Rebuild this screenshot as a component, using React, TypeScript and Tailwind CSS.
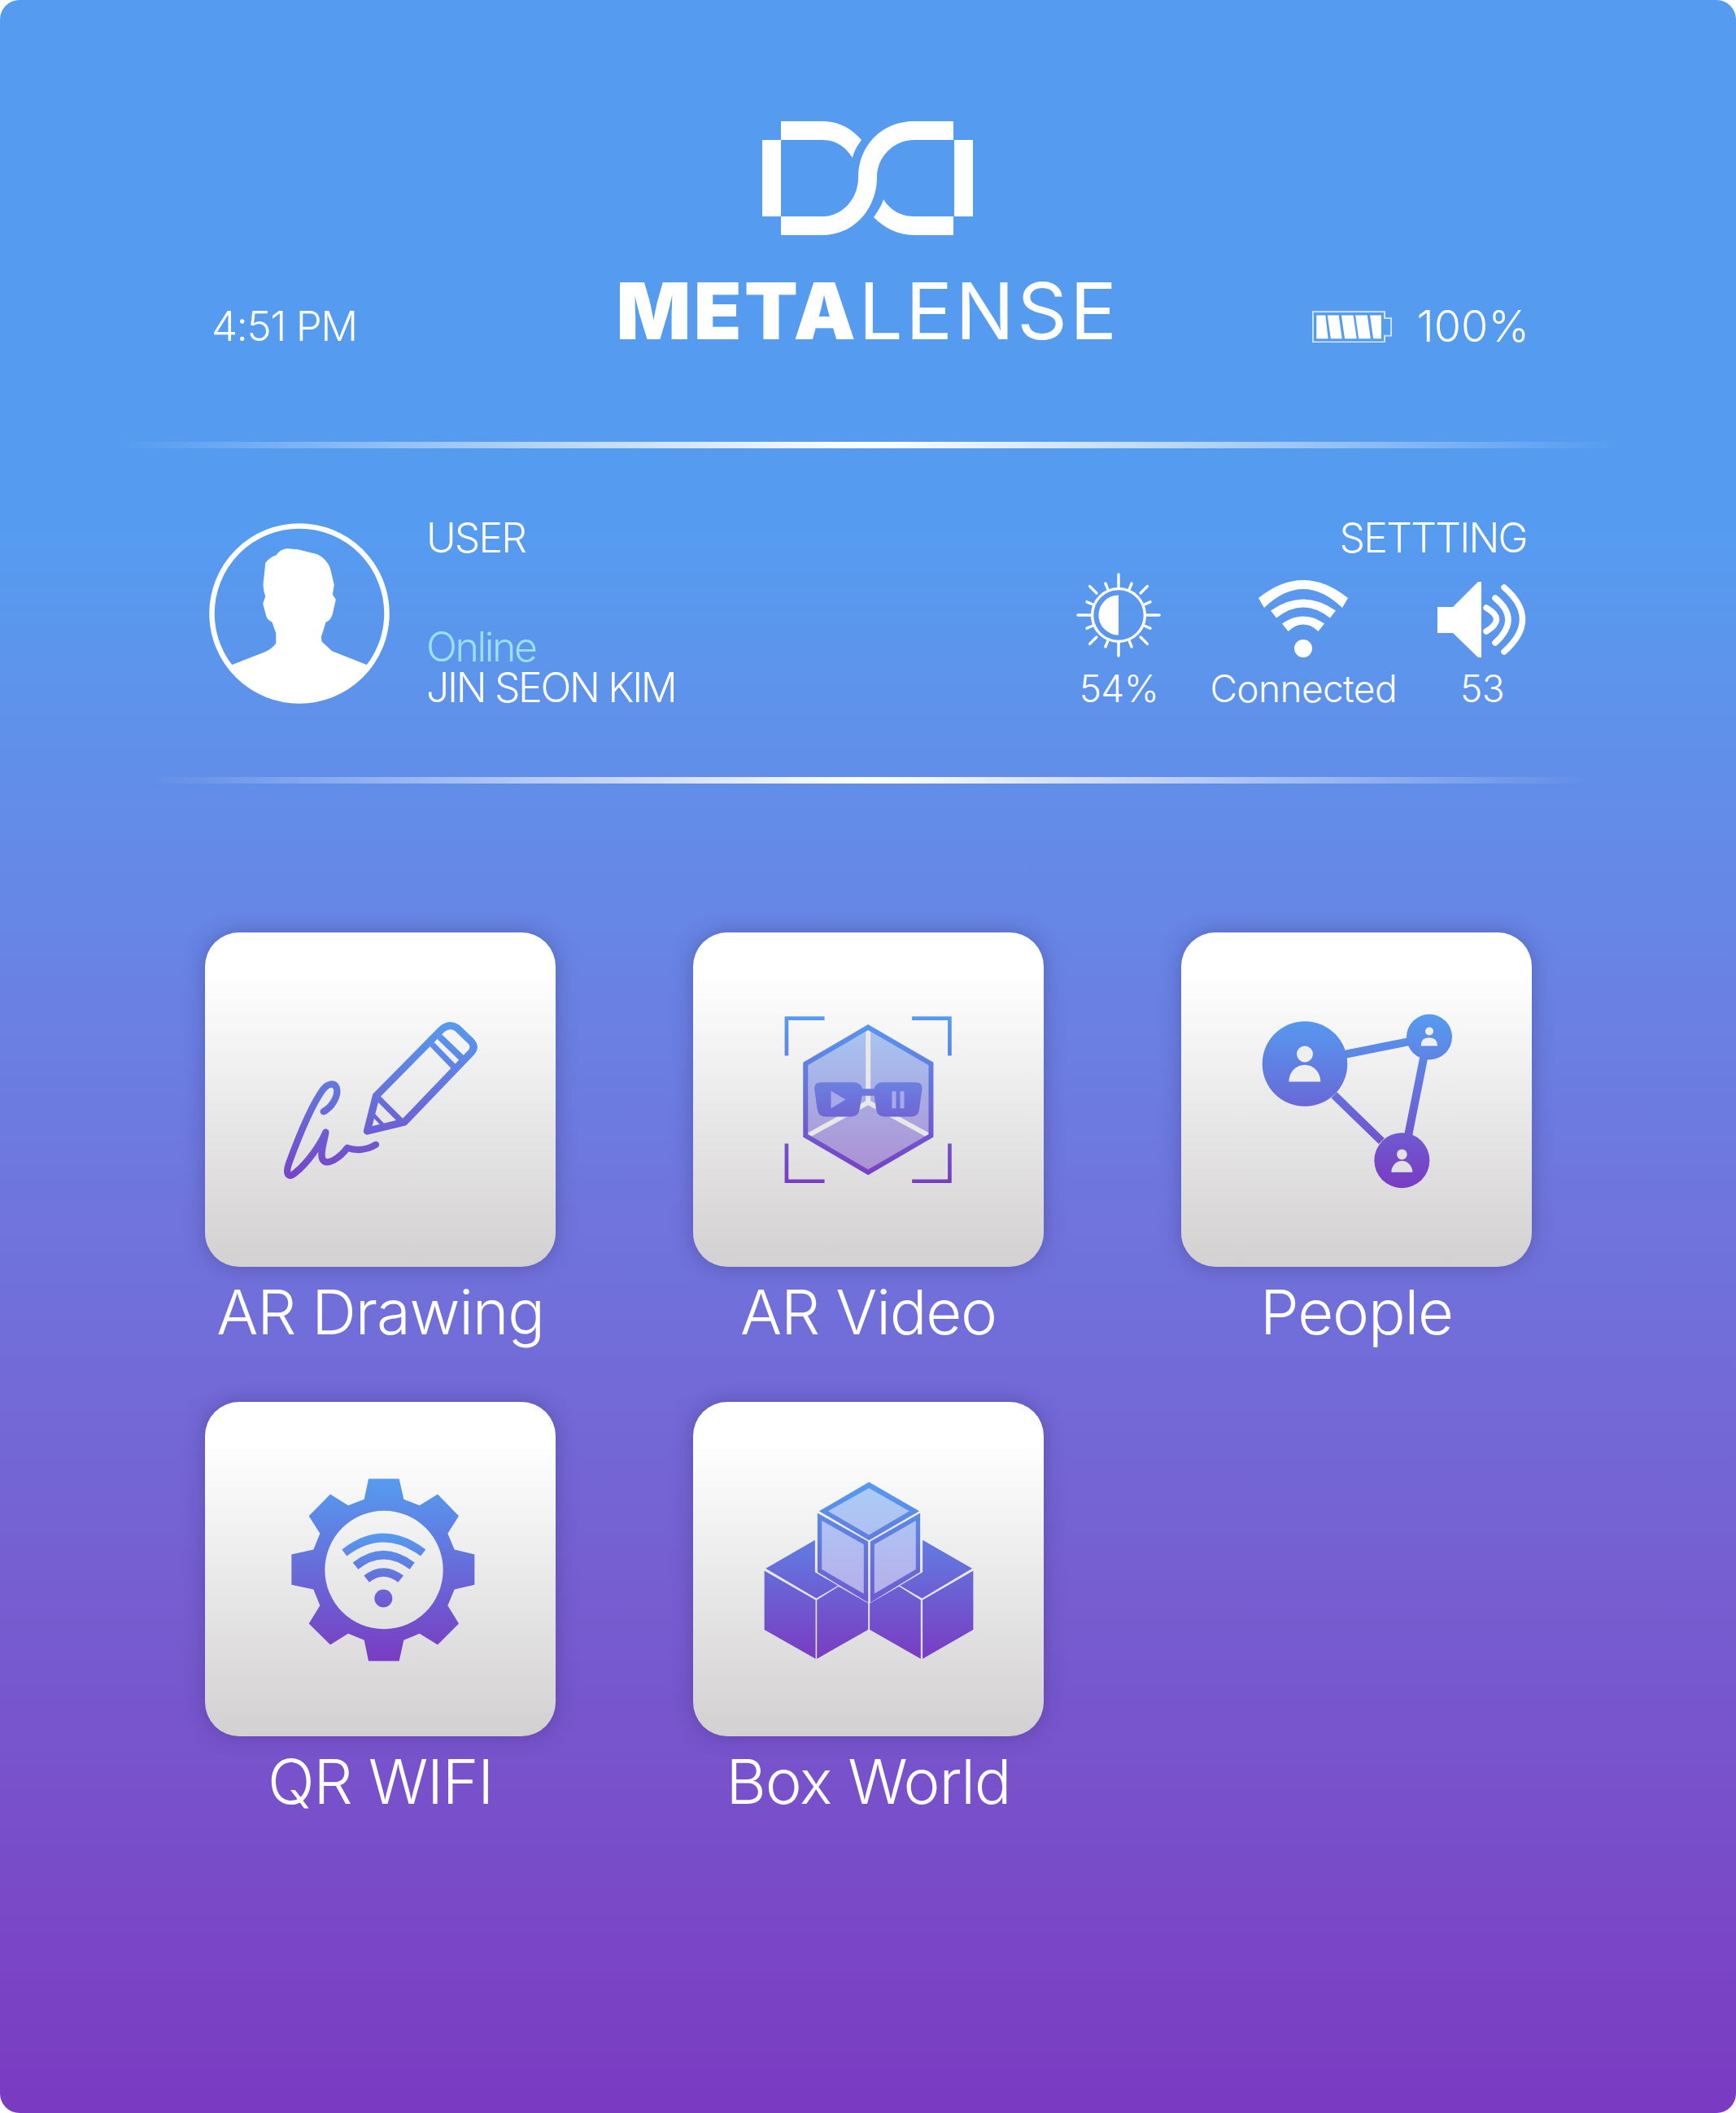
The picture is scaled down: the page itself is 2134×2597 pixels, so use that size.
const font = "[font-family:Inter,'Noto_Sans',sans-serif]";

function Logo() {
  return (
    <svg viewBox="938 149 260 141" className="w-[260px] h-[141px]" fill="#fff">
      <rect x="938" y="172" width="23" height="94" />
      <rect x="1174" y="172" width="23" height="94" />
      <path d="M961,149 H1012 C1032,149 1048,158 1060,172 C1054,180 1051,186 1049,194 C1040,180 1028,172 1012,172 H961 Z" />
      <path d="M961,266 H1012 C1036,266 1056,245 1056,218 C1056,180 1084,149 1125,149 H1173 V172 H1125 C1099,172 1079,193 1079,218 C1079,256 1051,289 1012,289 H961 Z" />
      <path d="M1173,289 H1125 C1105,289 1088,280 1075,267 C1081,258 1085,252 1087,245 C1095,258 1108,266 1125,266 H1173 Z" />
    </svg>
  );
}

function Battery() {
  return (
    <svg viewBox="820 110 240 108" preserveAspectRatio="none" className="w-[98px] h-[39px]">
      <path d="M822,113 H1038 V135 H1058 V195 H1038 V216 H822 Z" fill="none" stroke="#d5e6fb" strokeWidth="5" />
      <path d="M833,125 H860 L868,205 H833 Z M866,125 H900 L910,205 H876 Z M908,125 H944 L954,205 H918 Z M950,125 H986 L996,205 H960 Z M994,125 H1028 V205 H1004 Z" fill="#fff" />
    </svg>
  );
}

function Avatar() {
  return (
    <svg viewBox="0 0 222 222" className="w-[222px] h-[222px] shrink-0">
      <circle cx="111" cy="111" r="107.5" fill="none" stroke="#fff" strokeWidth="6.5" />
      <path
        d="M25.4,176 L69,159 Q78,155 83,148 L83,135 L78,121 Q72,118 71,114 L67,99 L70,90 Q66,80 68,69 L70,49 Q76,42 83,40 Q88,32 97,32 L109,33 L133,39 Q144,45 148,55 L153,76 L151,88 L155,94 L151,112 Q148,120 143,121 L137,140 L138,146 L151,158 L196.6,176 A107.5,107.5 0 0 1 25.4,176 Z"
        fill="#fff"
        stroke="#fff"
        strokeWidth="1.5"
        strokeLinejoin="round"
      />
    </svg>
  );
}

function Sun() {
  const angles = [0, 45, 90, 135, 180, 225, 270, 315];
  return (
    <svg viewBox="-53 -53 106 106" className="w-[104px] h-[104px]">
      <circle r="33" fill="none" stroke="#fff" strokeWidth="3.5" />
      <path d="M0,-25 A25,25 0 0 0 0,25 Z" fill="#fff" />
      <g stroke="#fff" strokeWidth="3.5" strokeLinecap="round">
        {angles.map((a) => (
          <line key={a} x1="0" y1={a % 90 === 0 ? -35 : -39} x2="0" y2="-51" transform={`rotate(${a})`} />
        ))}
        {angles.map((a) => (
          <line key={a} x1="0" y1="-36" x2="0" y2="-43" transform={`rotate(${a + 22.5})`} />
        ))}
      </g>
    </svg>
  );
}

function WifiBig() {
  return (
    <svg viewBox="0 0 110 95" className="w-[110px] h-[95px]" fill="#fff">
      <path d="M0,22 Q55,-22 110,22 L103,34 Q55,-12 7,34 Z" />
      <path d="M15,37.5 Q55,9.5 95,37.5 L88,46.5 Q55,20.5 22,46.5 Z" />
      <path d="M29,53.5 Q55,35.7 81,53.5 L73.5,63 Q55,46.2 36.5,63 Z" />
      <circle cx="55" cy="84" r="11" />
    </svg>
  );
}

function Speaker() {
  return (
    <svg viewBox="0 0 110 93" className="w-[110px] h-[93px]">
      <path d="M0,31 H19 L50,0 H54 V93 H50 L19,63 H0 Z" fill="#fff" />
      <g fill="none" stroke="#fff" strokeWidth="7.5" strokeLinecap="round">
        <path d="M60,32 Q85,46 60,61" />
        <path d="M71,20 Q103,46 71,75" />
        <path d="M82,7 Q127,46 82,86" />
      </g>
    </svg>
  );
}

function Divider() {
  return <div className="h-[8px] w-full bg-linear-to-r from-transparent via-white to-transparent" />;
}

function Grad({ id, y1, y2 }: { id: string; y1: number; y2: number }) {
  return (
    <linearGradient id={id} gradientUnits="userSpaceOnUse" x1="0" x2="0" y1={y1} y2={y2}>
      <stop offset="0" stopColor="#559cf0" />
      <stop offset="1" stopColor="#7a3bc2" />
    </linearGradient>
  );
}

function PencilIcon() {
  return (
    <svg viewBox="35 46 1293 1232" className="w-full h-full">
      <defs>
        <Grad id="pen" y1={372} y2={1010} />
      </defs>
      <g fill="none" stroke="url(#pen)" strokeLinejoin="round">
        <path strokeWidth="27" d="M633,778 L666,648 L905,406 Q935,378 965,398 L1015,446 Q1036,468 1015,490 L770,745 Z" />
        <path strokeWidth="22" d="M872,458 L952,540" />
        <path strokeWidth="24" d="M900,430 L985,512" />
        <path strokeWidth="22" d="M672,655 L765,748" />
        <path strokeWidth="14" d="M650,712 L695,760" />
        <path
          strokeWidth="25"
          strokeLinecap="round"
          d="M472,706 C500,692 530,650 520,618 C512,598 488,602 470,625 C430,680 380,800 345,895 C328,942 345,952 370,930 C410,898 460,830 480,782 C475,820 456,862 470,885 C485,905 530,880 560,840 C590,850 630,850 665,828"
        />
      </g>
    </svg>
  );
}

function VideoIcon() {
  return (
    <svg viewBox="37 46 1294 1232" className="w-full h-full">
      <defs>
        <Grad id="hex" y1={354} y2={970} />
        <linearGradient id="lens" gradientUnits="userSpaceOnUse" x1="0" x2="0" y1="598" y2="725">
          <stop offset="0" stopColor="#6b80e0" />
          <stop offset="1" stopColor="#7065d5" />
        </linearGradient>
      </defs>
      <path d="M683,395 L915,530 V795 L683,930 L452,795 V530 Z" fill="url(#hex)" fillOpacity="0.5" />
      <path d="M683,405 V672 M460,795 L683,672 L908,795" fill="none" stroke="#e8e8e8" strokeWidth="18" />
      <path d="M683,395 L915,530 V795 L683,930 L452,795 V530 Z" fill="none" stroke="url(#hex)" strokeWidth="18" />
      <path d="M382,500 V362 H522 M845,362 H984 V500 M382,824 V963 H522 M845,963 H984 V824" fill="none" stroke="url(#hex)" strokeWidth="14" />
      <path
        fill="url(#lens)"
        d="M510,598 H630 Q655,598 662,622 H705 Q712,598 735,598 H858 Q885,598 882,625 L872,695 Q870,725 842,725 H745 Q715,725 712,695 L706,648 H660 L652,695 Q648,725 620,725 H525 Q498,725 495,695 L485,625 Q482,598 510,598 Z"
      />
      <path d="M546,630 L600,662 L546,694 Z M771,631 H786 V694 H771 Z M801,631 H816 V694 H801 Z" fill="#a9a9ea" />
    </svg>
  );
}

function PeopleIcon() {
  return (
    <svg viewBox="36 46 1293 1232" className="w-full h-full">
      <defs>
        <Grad id="ppl" y1={348} y2={987} />
      </defs>
      <path d="M640,495 L880,447 M932,500 L872,800 M600,645 L775,815" stroke="url(#ppl)" strokeWidth="30" fill="none" />
      <circle cx="492" cy="530" r="157" fill="url(#ppl)" />
      <circle cx="951" cy="431" r="84" fill="url(#ppl)" />
      <circle cx="850" cy="886" r="102" fill="url(#ppl)" />
      <g fill="#efefef">
        <circle cx="492" cy="494" r="30" />
        <path d="M433,596 A58,62 0 0 1 550,596 Z" />
        <circle cx="951" cy="410" r="15" />
        <path d="M920,464 Q920,433 950,433 Q981,433 981,464 Z" />
      </g>
      <g fill="#e3e2e2">
        <circle cx="850" cy="864" r="19" />
        <path d="M811,930 A39,42 0 0 1 889,930 Z" />
      </g>
    </svg>
  );
}

function GearIcon() {
  return (
    <svg viewBox="35 38 1293 1232" className="w-full h-full">
      <defs>
        <Grad id="gear" y1={321} y2={993} />
        <Grad id="gearwifi" y1={522} y2={900} />
      </defs>
      <path
        fill="url(#gear)"
        fillRule="evenodd"
        d="M638,321 H751 L768,397 L826,419 L893,378 L971,458 L930,523 L955,582 L1029,600 V712 L955,729 L930,788 L971,855 L893,933 L826,892 L768,916 L751,993 H638 L622,916 L563,892 L497,933 L418,855 L459,788 L435,729 L354,712 V600 L435,582 L459,523 L418,458 L497,378 L563,419 L622,397 Z M913,657 A218,218 0 1 0 477,657 A218,218 0 1 0 913,657 Z"
      />
      <g fill="url(#gearwifi)">
        <path d="M540,582 Q692,462 849,582 L830,606 Q692,504 558,606 Z" />
        <path d="M580,630 Q692,542 808,630 L790,655 Q692,581 600,655 Z" />
        <path d="M621,678 Q692,622 767,678 L747,703 Q692,661 641,703 Z" />
        <circle cx="693" cy="762" r="33" />
      </g>
    </svg>
  );
}

function BoxIcon() {
  return (
    <svg viewBox="40 38 1294 1232" className="w-full h-full">
      <defs>
        <Grad id="box" y1={333} y2={985} />
      </defs>
      <g fill="url(#box)">
        <path d="M308,652 L490,547 V665 L575,715 L495,762 Z" />
        <path d="M303,660 L492,768 V985 L303,878 Z" />
        <path d="M497,768 L577,718 L686,780 V878 L497,985 Z" />
        <path d="M887,547 L1070,652 L885,762 L803,715 L887,665 Z" />
        <path d="M692,780 L800,718 L880,768 V985 L692,878 Z" />
        <path d="M887,768 L1074,660 V878 L887,985 Z" />
        <path d="M689,333 L875,440 L689,548 L505,440 Z" />
        <path d="M499,447 L686,552 V778 L499,665 Z" />
        <path d="M694,552 L878,447 V665 L694,778 Z" />
      </g>
      <g fill="#fff" fillOpacity="0.5">
        <path d="M689,355 L838,440 L689,528 L538,440 Z" />
        <path d="M515,475 L670,563 V745 L515,655 Z" />
        <path d="M709,563 L862,475 V655 L709,745 Z" />
      </g>
    </svg>
  );
}

const apps = [
  { label: "AR Drawing", icon: <PencilIcon /> },
  { label: "AR Video", icon: <VideoIcon /> },
  { label: "People", icon: <PeopleIcon /> },
  { label: "QR WIFI", icon: <GearIcon /> },
  { label: "Box World", icon: <BoxIcon /> },
];

export default function App() {
  return (
    <div className={`w-[2134px] h-[2597px] overflow-hidden rounded-[24px] bg-linear-to-b from-[#559cf0] from-[25%] to-[#7a3bc2] to-[99%] text-white font-light ${font}`}>
      {/* Header */}
      <div className="flex flex-col items-center pt-[149px] h-[543px]">
        <Logo />
        <div className="mt-[44px] flex items-end justify-between w-[1626px]">
          <span className="w-[400px] pl-[6px] text-[51px] leading-[58px] tracking-[-1.5px]">4:51 PM</span>
          <span className="text-[96px] leading-[96px] tracking-[3.5px]">
            <span className="font-black">META</span>
            <span className="font-normal">LENSE</span>
          </span>
          <div className="w-[400px] flex items-center justify-end gap-[30px]">
            <Battery />
            <span className="text-[54px] leading-[58px]">100%</span>
          </div>
        </div>
      </div>
      <div className="px-[150px]">
        <Divider />
      </div>

      {/* User + settings */}
      <div className="h-[404px] px-[257px] pt-[92px] flex justify-between">
        <div className="flex items-start gap-[45px]">
          <Avatar />
          <div className="flex flex-col tracking-[-2.4px] text-[50px]">
            <span className="leading-[58px] -mt-[11px] tracking-[-2px]">USER</span>
            <span className="mt-[81px] leading-[48px] text-[#9be0f7]">Online</span>
            <span className="leading-[50px] mt-[1px]">JIN SEON KIM</span>
          </div>
        </div>
        <div className="flex flex-col items-end">
          <span className="text-[50px] leading-[58px] -mt-[11px] tracking-[-1.8px]">SETTTING</span>
          <div className="mt-[14px] flex items-end text-[46px] tracking-[-0.6px]">
            <div className="flex flex-col items-center mr-[60px]">
              <Sun />
              <span className="leading-[56px] mt-[10px]">54%</span>
            </div>
            <div className="flex flex-col items-center mr-[50px]">
              <WifiBig />
              <span className="leading-[56px] mt-[10px]">Connected</span>
            </div>
            <div className="flex flex-col items-center">
              <Speaker />
              <span className="leading-[56px] mt-[10px]">53</span>
            </div>
          </div>
        </div>
      </div>
      <div className="px-[180px]">
        <Divider />
      </div>

      {/* App grid */}
      <div className="pt-[183px] px-[252px] grid grid-cols-[431px_431px_431px] gap-x-[169px] gap-y-[166px]">
        {apps.map((app) => (
          <div key={app.label} className="relative flex flex-col items-center">
            <div className="w-[431px] h-[411px] rounded-[42px] bg-linear-to-b from-white from-[12%] to-[#d2d0d1] shadow-[0_0_24px_rgba(50,40,110,0.35)]">
              {app.icon}
            </div>
            <span className="absolute top-[421px] text-[76px] leading-[90px] tracking-[-1.2px] whitespace-nowrap">{app.label}</span>
          </div>
        ))}
      </div>
    </div>
  );
}
